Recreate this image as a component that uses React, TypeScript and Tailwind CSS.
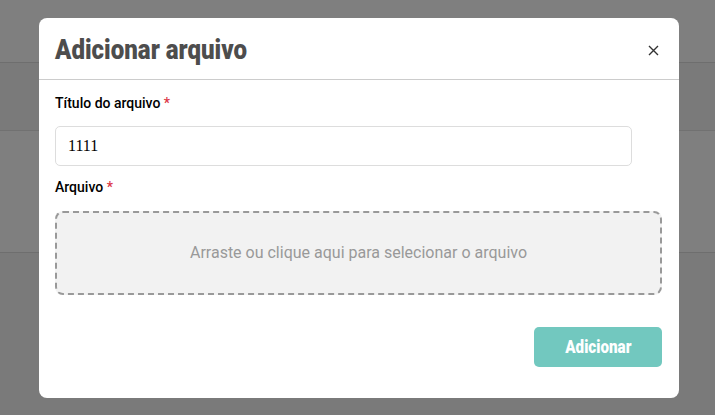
import React from 'react';

const FileModal: React.FC = () => {
  return (
    <div className="absolute left-[39px] top-[18px] w-[640px] h-[380px] bg-white rounded-lg flex flex-col">
      {/* header */}
      <div className="h-[62px] flex items-center justify-between pl-4 pr-5 border-b border-[#cccccc]">
        <h2
          className="inline-block origin-left scale-x-[0.86] mt-[3px] text-[28px] font-black text-[#4d4d4d] whitespace-nowrap"
          style={{ fontFamily: 'Roboto, sans-serif' }}
        >
          Adicionar arquivo
        </h2>
        <button className="text-[#333] mt-1" aria-label="Fechar">
          <svg width="11" height="11" viewBox="0 0 11 11" fill="none" stroke="currentColor" strokeWidth="1.4">
            <path d="M1 1L10 10M10 1L1 10" />
          </svg>
        </button>
      </div>

      {/* body */}
      <div className="flex flex-col pl-4 pr-[17px] pt-[13px]" style={{ fontFamily: 'Roboto, sans-serif' }}>
        <label className="text-[14px] leading-5 font-medium text-black">
          Título do arquivo <span className="text-[#dc3545]">*</span>
        </label>
        <input
          className="mt-[13px] w-[95%] h-10 px-3 border border-[#dddddd] rounded-[5px] text-[16px] text-black outline-none"
          style={{ fontFamily: '"Liberation Serif", serif' }}
          defaultValue="1111"
        />
        <label className="mt-[11px] text-[14px] leading-5 font-medium text-black">
          Arquivo <span className="text-[#dc3545]">*</span>
        </label>
        <div className="mt-[14px] h-[84px] rounded-lg border-2 border-dashed border-[#999999] bg-[#f2f2f2] flex items-center justify-center text-[16px] text-[#999999]">
          Arraste ou clique aqui para selecionar o arquivo
        </div>
        <div className="flex justify-end mt-8">
          <button className="w-[128px] h-10 rounded-[5px] bg-[#72c8bf] text-white flex items-center justify-center">
            <span className="inline-block scale-x-[0.8] text-[19px] font-black">Adicionar</span>
          </button>
        </div>
      </div>
    </div>
  );
};

export default function App() {
  return (
    <div className="relative w-[715px] h-[415px] overflow-hidden bg-white">
      {/* page underneath */}
      <div className="h-[63px] border-b border-[#dddddd]" />
      <div className="h-[68px] bg-[#f4f4f4] border-b border-[#e2e2e2]" />
      <div className="h-[122px] border-b border-[#dddddd]" />
      <div className="h-[162px] bg-[#f4f4f4]" />
      {/* backdrop */}
      <div className="absolute inset-0 bg-black/50" />
      <FileModal />
    </div>
  );
}
